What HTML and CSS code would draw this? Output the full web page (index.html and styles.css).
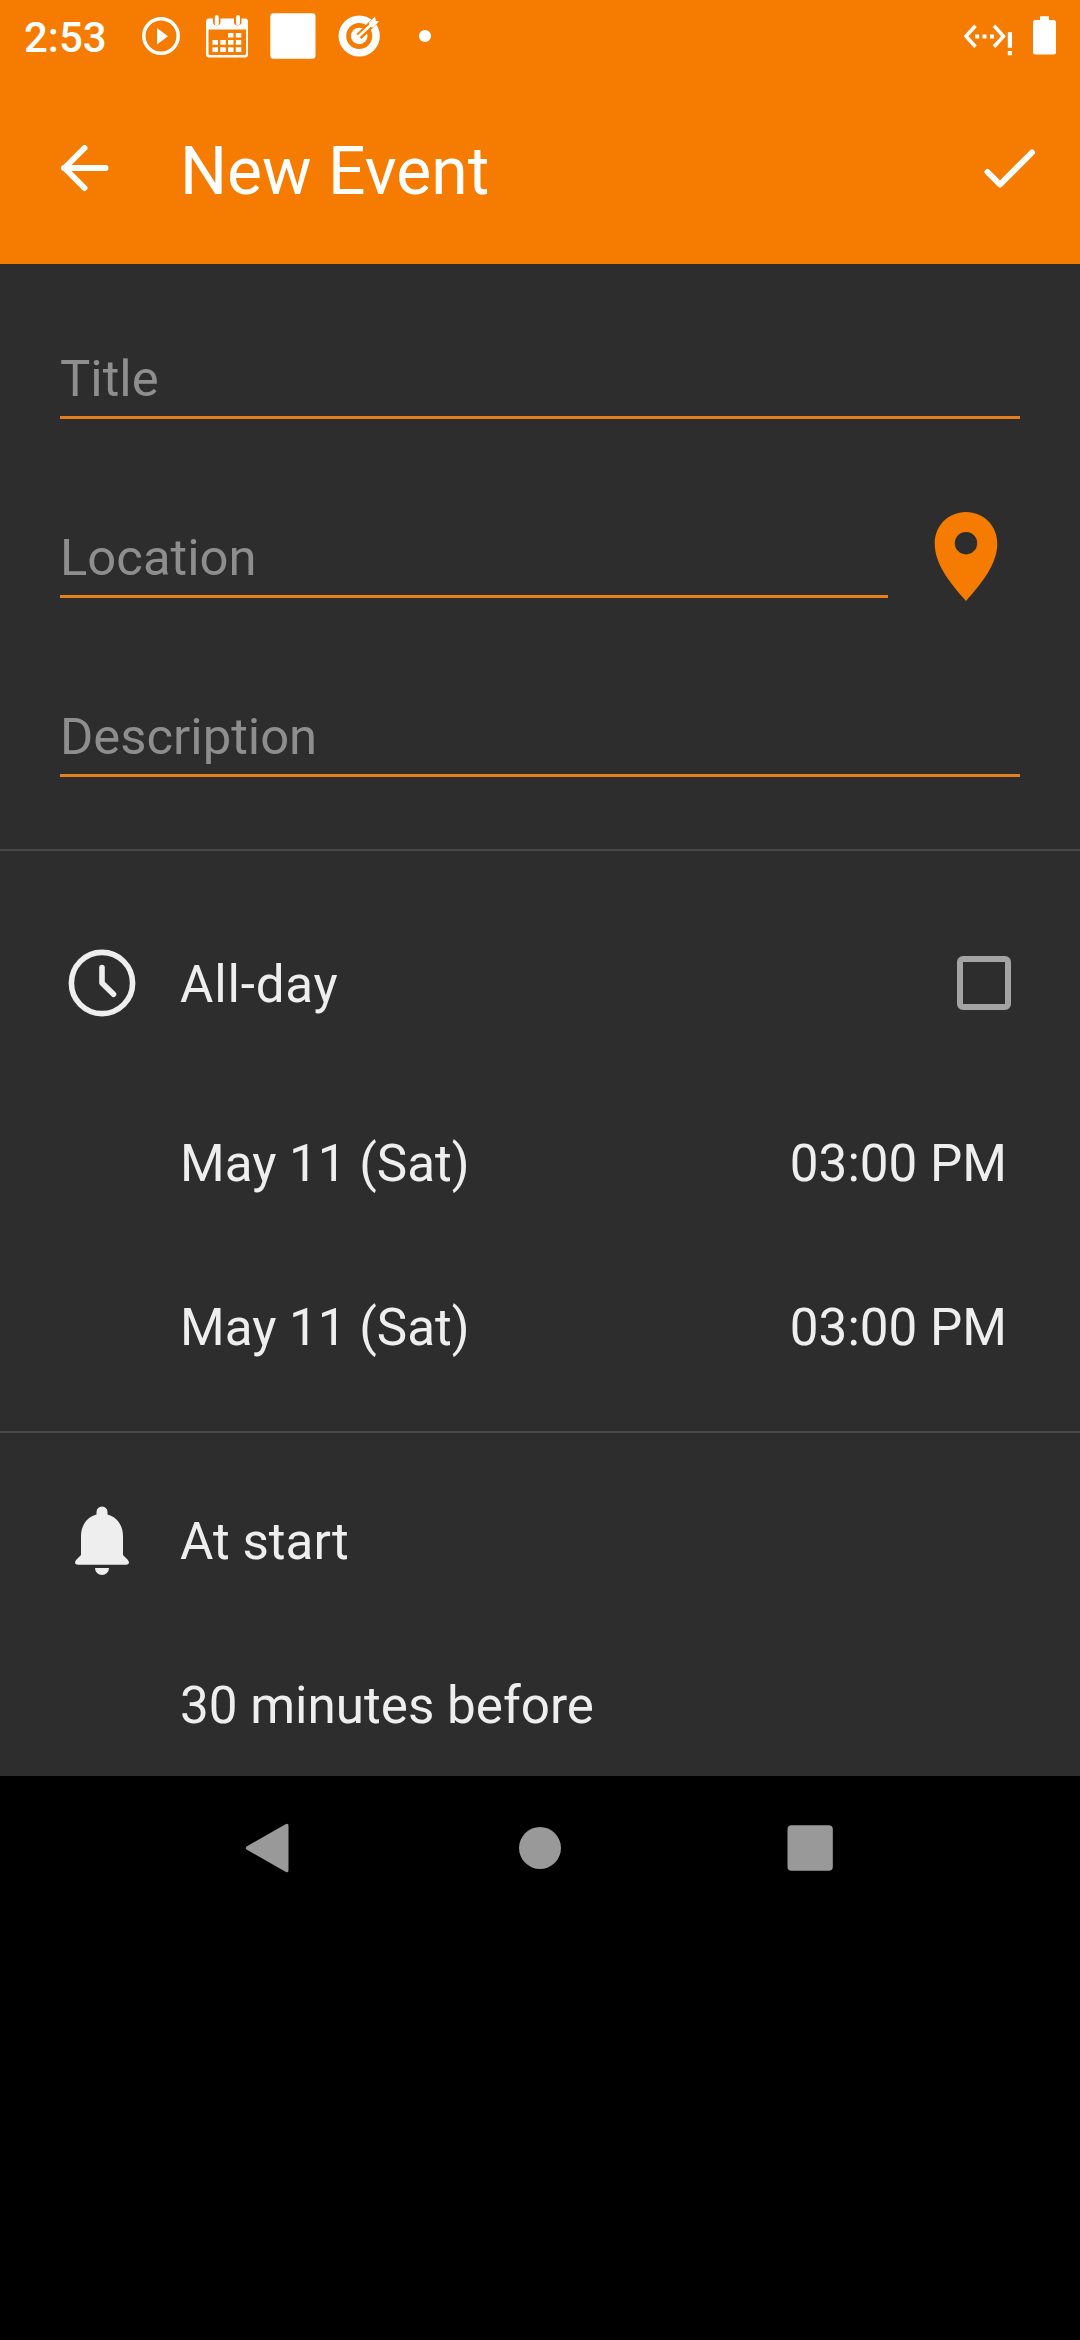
FILE: index.html
```html
<!DOCTYPE html>
<html lang="en">
<head>
<meta charset="utf-8">
<title>New Event</title>
<link rel="stylesheet" href="styles.css">
</head>
<body>
<div class="screen">
  <header class="header">
    <div class="status">
      <span class="clock">2:53</span>
      <svg class="status-icons" width="300" height="66" viewBox="136 0 300 66" fill="#fff">
        <circle cx="161" cy="36" r="17.2" fill="none" stroke="#fff" stroke-width="3.5"/>
        <path d="M157 28v16.500l11-8.250z"/>
        <path fill-rule="evenodd" d="M209 18.500h4v4.500a4 4 0 0 0 7.500 0v-4.500h13.500v4.500a4 4 0 0 0 7.500 0v-4.500h3.500a3 3 0 0 1 3 3v33a3 3 0 0 1-3 3h-36a3 3 0 0 1-3-3v-33a3 3 0 0 1 3-3zM208.500 29.500v24a1.500 1.500 0 0 0 1.500 1.500h34.500a1.500 1.500 0 0 0 1.500-1.500v-24z"/>
        <rect x="214.800" y="15" width="4" height="10.500" rx="2"/><rect x="236" y="15" width="4" height="10.500" rx="2"/>
        <path d="M228 33h5.500v4.500H228zM235.800 33h5.500v4.500h-5.500zM212.500 40h5.500v4.800h-5.500zM220.300 40h5.500v4.800h-5.500zM228 40h5.500v4.800H228zM235.800 40h5.500v4.800h-5.500zM212.500 47.200h5.500v4.800h-5.500zM220.300 47.200h5.500v4.800h-5.500zM228 47.200h5.500v4.800H228zM235.800 47.200h5.500v4.800h-5.500z"/>
        <rect x="270.300" y="13.300" width="45.200" height="45.500" rx="3"/>
        <circle cx="359.200" cy="36" r="16.800" fill="none" stroke="#fff" stroke-width="7.600"/>
        <circle cx="359.200" cy="36" r="8.300"/>
        <path d="M359 36.500L377 19" fill="none" stroke="#f57c00" stroke-width="7"/>
        <path d="M358.500 36.500L374 22" fill="none" stroke="#fff" stroke-width="2.600" stroke-linecap="round"/>
        <path d="M369 22.500l6-6 .8 4.200 3.200.8-6 6-3.500-.8z"/>
        <circle cx="425" cy="36" r="6.100"/>
      </svg>
      <svg class="system-icons" width="100" height="66" viewBox="960 0 100 66" fill="#fff">
        <path d="M975.500 25.800L966 36.300l9.500 10.500M994 25.800l9.500 10.500-9.500 10.500" fill="none" stroke="#fff" stroke-width="3.600"/>
        <path d="M975.200 34.500h4v4h-4zM982.500 34.500h4v4h-4zM990 34.500h4v4h-4zM1007.800 32.300h4.200v15.500h-4.200zM1007.800 51h4.200v4.300h-4.200z"/>
        <path d="M1040 16.200h9v3.800h4.500a2.500 2.500 0 0 1 2.500 2.500v29.500a2.500 2.500 0 0 1-2.500 2.500h-18a2.500 2.500 0 0 1-2.500-2.500v-29.500a2.500 2.500 0 0 1 2.500-2.500h4.500z"/>
      </svg>
    </div>
    <div class="toolbar">
      <svg class="back" width="60" height="60" viewBox="0 0 60 60"><path d="M50.500 30H9M29.500 10L9.500 30l20 20" /></svg>
      <h1 class="toolbar-title">New Event</h1>
      <svg class="check" width="60" height="60" viewBox="0 0 60 60"><path d="M8.500 34L21 46.500 53 14.500"/></svg>
    </div>
  </header>

  <main class="content">
    <section class="fields">
      <div class="field">Title</div>
      <div class="field-row">
        <div class="field">Location</div>
        <svg class="pin" width="66" height="92" viewBox="0 0 66 92"><path fill-rule="evenodd" d="M33 1C15.500 1 1.700 14.800 1.700 32.500 1.700 53 17 72 33 90 49 72 64.300 53 64.300 32.500 64.300 14.800 50.500 1 33 1zm0 20a11.200 11.200 0 1 1 0 22.400 11.200 11.200 0 0 1 0-22.400z"/></svg>
      </div>
      <div class="field">Description</div>
    </section>

    <section class="times">
      <div class="row row-tall">
        <svg class="row-icon" width="68" height="68" viewBox="0 0 68 68" fill="none"><circle cx="34" cy="34" r="30.600"/><path d="M34 18.500V34l11.500 11.300"/></svg>
        <span class="label">All-day</span>
        <span class="checkbox"></span>
      </div>
      <div class="row"><span class="label">May 11 (Sat)</span><span class="time">03:00 PM</span></div>
      <div class="row"><span class="label">May 11 (Sat)</span><span class="time">03:00 PM</span></div>
    </section>

    <section class="reminders">
      <div class="row">
        <svg class="row-icon bell" width="68" height="72" viewBox="0 0 68 72"><path d="M34 1.500a5.500 5.500 0 0 0-5.500 5.500v2.500C19 12 13 20.500 13 31v19l-4.700 4.800c-2.300 2.500-1.300 4.900 1.700 4.900h48c3 0 4-2.400 1.700-4.900L55 50V31c0-10.500-6-19-15.500-21.500V7a5.500 5.500 0 0 0-5.500-5.500zM27 63h14a7 7 0 0 1-14 0z"/></svg>
        <span class="label">At start</span>
      </div>
      <div class="row"><span class="label">30 minutes before</span></div>
    </section>
  </main>

  <nav class="navbar">
    <svg width="60" height="60" viewBox="0 0 60 60"><path d="M7 28.200L45.500 6.200Q48.500 4.500 48.500 8v44q0 3.500-3 1.800L7 31.800Q4.500 30 7 28.200z"/></svg>
    <svg width="60" height="60" viewBox="0 0 60 60"><circle cx="30" cy="30" r="21"/></svg>
    <svg width="60" height="60" viewBox="0 0 60 60"><rect x="7.500" y="7.200" width="45.300" height="45.500" rx="4"/></svg>
  </nav>
</div>
</body>
</html>
```

FILE: styles.css
```css
* { box-sizing: border-box; }

body {
  margin: 0;
  background: #000;
  font-family: Roboto, "Liberation Sans", sans-serif;
}

svg { display: block; flex: none; }

.screen {
  display: flex;
  flex-direction: column;
  width: 1080px;
  height: 2340px;
  overflow: hidden;
}

.header {
  height: 264px;
  background: #f57c00;
  color: #fff;
}

.status {
  display: flex;
  height: 66px;
  padding: 0 20px 0 24px;
}

.clock {
  width: 112px;
  font-size: 42px;
  font-weight: 500;
  line-height: 75px;
}

.system-icons { margin-left: auto; }

.toolbar {
  display: flex;
  align-items: center;
  height: 204px;
  padding: 0 41px 0 55px;
}

.toolbar-title {
  margin: 0 auto 0 65px;
  font-size: 66px;
  font-weight: 400;
  line-height: 80px;
  padding-top: 7px;
}

.back path,
.check path {
  fill: none;
  stroke: #fff;
  stroke-width: 6;
  stroke-linecap: round;
  stroke-linejoin: round;
}

.content {
  height: 1512px;
  background: #2d2d2d;
  color: #eee;
  font-size: 51.2px;
  line-height: 60px;
}

.fields {
  display: flex;
  flex-direction: column;
  gap: 109px;
  height: 587px;
  padding: 85px 60px 0;
  border-bottom: 2px solid #494949;
}

.field {
  flex: none;
  height: 70px;
  border-bottom: 3px solid #e37f1c;
  color: #8e8e8e;
  font-size: 50.8px;
}

.field-row {
  display: flex;
  gap: 45px;
  height: 70px;
}

.field-row .field { width: 828px; }

.pin {
  margin-top: -17px;
  fill: #f57c00;
}

.times {
  height: 582px;
  padding-top: 42px;
  border-bottom: 2px solid #494949;
}

.row {
  display: flex;
  align-items: center;
  height: 164px;
  padding: 2px 73px 0 180px;
}

.row-tall {
  height: 188px;
  padding: 0 69px 8px 180px;
}

.row-tall .label {
  padding-top: 4px;
  letter-spacing: 0.8px;
}

.row-icon {
  margin: 0 44px 0 -112px;
  fill: #eee;
}

.bell { margin-top: -2px; }

.row-tall .row-icon {
  fill: none;
  stroke: #eee;
  stroke-width: 5.6;
  stroke-linecap: round;
  stroke-linejoin: round;
}

.checkbox {
  width: 54px;
  height: 54px;
  margin-left: auto;
  border: 6px solid #a3a3a3;
  border-radius: 6px;
}

.time { margin-left: auto; }

.reminders { padding-top: 26px; }

.navbar {
  display: flex;
  justify-content: center;
  gap: 210px;
  padding-top: 42px;
  fill: #999;
}
```
